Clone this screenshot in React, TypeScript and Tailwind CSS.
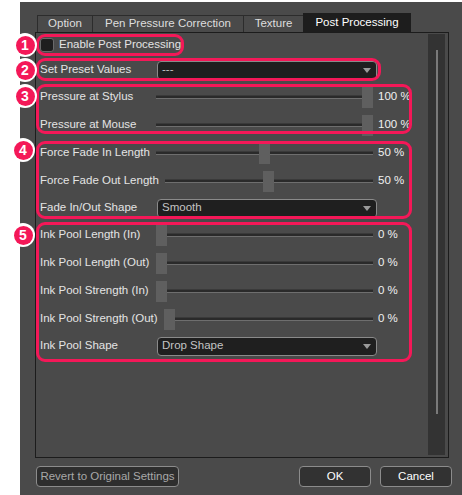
import type { ReactNode } from "react";

const RED = "border-[#f41858]";

function Slider({ value }: { value: number }) {
  return (
    <div className="relative flex h-[21px] flex-1 items-center">
      <div className="h-[4px] w-full border-t border-b border-t-[#3a3a3a] border-b-[#6e6e6e] bg-[#2a2a2a]" />
      <div
        className="absolute top-0 h-[21px] w-[11px] bg-[#5f5f5f]"
        style={{ left: `calc((100% - 11px) * ${value / 100})` }}
      />
    </div>
  );
}

function SliderRow({ label, value, h = "h-[28px]" }: { label: string; value: number; h?: string }) {
  return (
    <div className={`flex ${h} items-center pl-[4px] pr-[17px]`}>
      <span className="mr-[6px] min-w-[110px] whitespace-nowrap">{label}</span>
      <Slider value={value} />
      <span className="w-[38px] shrink-0 pl-[5px] whitespace-nowrap text-[#f0f0f0]">{value} %</span>
    </div>
  );
}

function Select({ text }: { text: string }) {
  return (
    <div className="ml-[1px] flex h-[19px] w-[220px] items-center justify-between rounded-[4px] border border-[#8a8a8a] bg-[#1f1f1f] pl-[4px] pr-[5px] text-[#c4c4c4]">
      <span>{text}</span>
      <svg width="8" height="5" viewBox="0 0 8 5">
        <path d="M0 0H8L4 5Z" fill="#9a9a9a" />
      </svg>
    </div>
  );
}

function SelectRow({ label, text, h = "h-[26px]" }: { label: string; text: string; h?: string }) {
  return (
    <div className={`flex ${h} items-center pl-[4px] pr-[17px]`}>
      <span className="mr-[6px] min-w-[110px] whitespace-nowrap">{label}</span>
      <Select text={text} />
    </div>
  );
}

function Badge({ n, x, y }: { n: number; x: number; y: number }) {
  return (
    <div
      className="absolute flex h-[24px] w-[24px] items-center justify-center rounded-full bg-white"
      style={{ left: x - 12, top: y - 12 }}
    >
      <div className="flex h-[19px] w-[19px] items-center justify-center rounded-full bg-[#f41858] text-[14px] font-bold leading-none text-white">
        {n}
      </div>
    </div>
  );
}

function Frame({ x, y, w, h }: { x: number; y: number; w: number; h: number }) {
  return (
    <div
      className={`absolute rounded-[9px] border-[3px] ${RED}`}
      style={{ left: x, top: y, width: w, height: h }}
    />
  );
}

function Tab({ children, active, w }: { children: ReactNode; active?: boolean; w: string }) {
  return active ? (
    <div className={`flex h-[19px] ${w} items-center justify-center bg-[#1d1d1d] text-white`}>{children}</div>
  ) : (
    <div className={`flex h-[17px] ${w} items-center justify-center border-t border-l border-[#2c2c2c] text-[#dedede]`}>
      {children}
    </div>
  );
}

function Button({ children, w, dim }: { children: ReactNode; w: string; dim?: boolean }) {
  return (
    <div
      className={`flex h-[21px] ${w} items-center justify-center rounded-[4px] border border-[#8c8c8c] ${
        dim ? "bg-[#2e2e2e] text-[#a8a8a8]" : "bg-[#323232] text-white"
      }`}
    >
      {children}
    </div>
  );
}

export default function App() {
  return (
    <div className="relative h-[495px] w-[462px] overflow-hidden bg-white font-['Liberation_Sans',sans-serif] text-[11.5px] text-[#e4e4e4]">
      <div className="ml-[20px] mt-[2px] flex h-[493px] w-[442px] flex-col bg-[#4a4a4a] pl-[15px] pt-[11px]">
        {/* tabs */}
        <div className="ml-[2px] flex h-[19px] items-end">
          <Tab w="w-[55px]">Option</Tab>
          <Tab w="w-[151px]">Pen Pressure Correction</Tab>
          <Tab w="w-[60px]">Texture</Tab>
          <Tab w="w-[108px]" active>
            Post Processing
          </Tab>
        </div>

        {/* panel */}
        <div className="flex h-[426px] w-[414px] border border-[#1c1c1c]">
          <div className="flex flex-1 flex-col">
            <div className="flex h-[24px] items-center pl-[4px]">
              <div className="h-[14px] w-[14px] rounded-[3px] border border-[#6a6a6a] bg-[#1e1e1e]" />
              <span className="ml-[5px]">Enable Post Processing</span>
            </div>
            <SelectRow label="Set Preset Values" text="---" />
            <SliderRow label="Pressure at Stylus" value={100} />
            <SliderRow label="Pressure at Mouse" value={100} />
            <SliderRow label="Force Fade In Length" value={50} />
            <SliderRow label="Force Fade Out Length" value={50} />
            <SelectRow label="Fade In/Out Shape" text="Smooth" />
            <SliderRow label="Ink Pool Length (In)" value={0} />
            <SliderRow label="Ink Pool Length (Out)" value={0} />
            <SliderRow label="Ink Pool Strength (In)" value={0} />
            <SliderRow label="Ink Pool Strength (Out)" value={0} />
            <SelectRow label="Ink Pool Shape" text="Drop Shape" />
          </div>
          {/* scrollbar */}
          <div className="mb-[2px] mr-[3px] mt-[1px] flex w-[17px] justify-center bg-[#333333] pt-[16px] pb-[41px]">
            <div className="w-[2px] bg-[#7a7a7a]" />
          </div>
        </div>

        {/* buttons */}
        <div className="mt-[8px] flex h-[21px] items-center">
          <div className="ml-[1px]">
            <Button w="w-[143px]" dim>
              Revert to Original Settings
            </Button>
          </div>
          <div className="ml-auto mr-[10px] flex gap-[9px]">
            <Button w="w-[72px]">OK</Button>
            <Button w="w-[72px]">Cancel</Button>
          </div>
        </div>
      </div>

      {/* annotations */}
      <Frame x={36} y={34} w={148} h={22} />
      <Frame x={36} y={58} w={345} h={23} />
      <Frame x={36} y={84} w={376} h={50} />
      <Frame x={36} y={141} w={376} h={78} />
      <Frame x={36} y={222} w={376} h={140} />
      <Badge n={1} x={25} y={45} />
      <Badge n={2} x={25} y={70} />
      <Badge n={3} x={25} y={96} />
      <Badge n={4} x={23} y={150} />
      <Badge n={5} x={23} y={235} />
    </div>
  );
}
